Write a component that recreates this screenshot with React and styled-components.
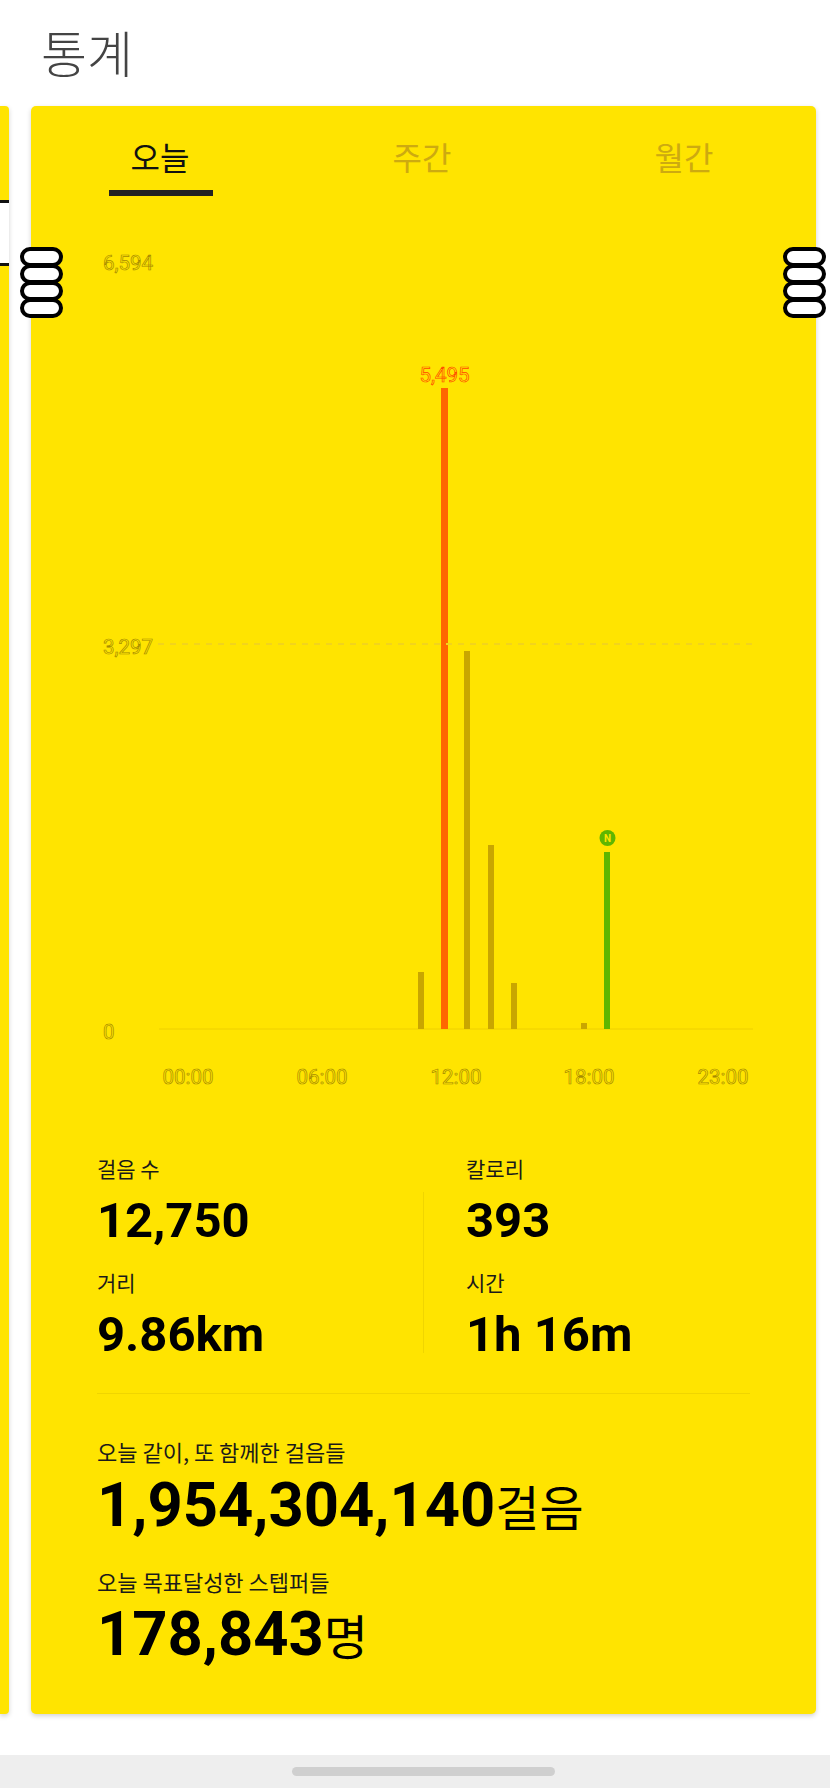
import React from "react";
import styled, { createGlobalStyle } from "styled-components";

const Y = "#ffe400";
const KR = '"Noto Sans CJK KR", sans-serif';

const Global = createGlobalStyle`
  html, body { margin: 0; padding: 0; background: #fff; }
  * { box-sizing: border-box; }
`;

const Screen = styled.div`
  width: 830px;
  height: 1788px;
  display: flex;
  flex-direction: column;
  overflow: hidden;
  position: relative;
  background: #fff;
`;

const Header = styled.header`
  height: 106px;
  padding: 20px 0 0 41px;
  font-family: ${KR};
  font-size: 50px;
  line-height: 62px;
  font-weight: 300;
  color: #444;
`;

const Carousel = styled.div`
  display: flex;
  gap: 22px;
  height: 1608px;
`;

const Peek = styled.div`
  width: 9px;
  height: 100%;
  flex: none;
  background: ${Y};
  border-radius: 0 4px 4px 0;
  box-shadow: 0 2px 5px rgba(0, 0, 0, 0.18);
  padding-top: 94px;
`;

const PeekBand = styled.div`
  height: 66px;
  background: #fff;
  border-top: 3px solid #111;
  border-bottom: 3px solid #111;
`;

const Card = styled.section`
  width: 785px;
  flex: none;
  height: 100%;
  background: ${Y};
  border-radius: 5px;
  box-shadow: 0 2px 5px rgba(0, 0, 0, 0.18);
`;

const Tabs = styled.nav`
  display: flex;
  height: 90px;
  margin-left: -2px;
`;

const Tab = styled.div`
  width: 262px;
  height: 100%;
  display: flex;
  justify-content: center;
  font-family: ${KR};
  font-size: 32px;
  line-height: 46px;
  padding-top: 27px;
  color: ${(p) => (p.$active ? "#111" : "#cdaa10")};
  position: relative;
  &::after {
    content: "";
    display: ${(p) => (p.$active ? "block" : "none")};
    position: absolute;
    left: 80px;
    bottom: 0;
    width: 104px;
    height: 6px;
    background: #222;
  }
`;

const ChartSvg = styled.svg`
  display: block;
  width: 785px;
  height: 944px;
`;

const AxisText = styled.text`
  font-family: Roboto, sans-serif;
  font-size: 20.5px;
  fill: ${Y};
  stroke: ${(p) => p.$stroke || "#a88c00"};
  stroke-width: 0.7px;
`;

const StatsGrid = styled.div`
  margin: 0 66px;
  display: grid;
  grid-template-columns: 369px 1fr;
  row-gap: 17px;
  padding: 14px 0 28px;
  border-bottom: 1px solid #f0d500;
  position: relative;
  &::before {
    content: "";
    position: absolute;
    left: 326px;
    top: 52px;
    height: 161px;
    width: 1px;
    background: #f0d500;
  }
`;

const Stat = styled.div`
  display: flex;
  flex-direction: column;
`;

const Label = styled.div`
  font-family: ${KR};
  font-size: ${(p) => (p.$big ? 22 : 21)}px;
  line-height: 28px;
  color: #1a1a1a;
  white-space: nowrap;
`;

const StatValue = styled.div`
  font-family: Roboto, sans-serif;
  font-weight: 700;
  font-size: 49px;
  line-height: 60px;
  margin-top: 9px;
  color: #000;
`;

const Totals = styled.div`
  margin: 0 66px;
  padding-top: 43px;
  display: flex;
  flex-direction: column;
`;

const TotalValue = styled.div`
  font-family: Roboto, sans-serif;
  font-weight: 700;
  font-size: 61.5px;
  line-height: 72px;
  height: 72px;
  margin: ${(p) => (p.$last ? "3px 0 0" : "4px 0 26px")};
  color: #000;
  white-space: nowrap;
`;

const Unit = styled.span`
  font-family: ${KR};
  font-weight: 400;
  font-size: 48px;
`;

const Rings = styled.div`
  position: absolute;
  top: 247px;
  left: ${(p) => p.$left}px;
  display: flex;
  flex-direction: column;
`;

const Ring = styled.div`
  width: 43px;
  height: 20px;
  margin-top: -3px;
  &:first-child { margin-top: 0; }
  background: #fff;
  border: 4.5px solid #000;
  border-radius: 10px;
`;

const HomeBar = styled.div`
  margin-top: 41px;
  height: 33px;
  background: #eeeeee;
  display: flex;
  justify-content: center;
  padding: 12px 0 0 16px;
`;

const Handle = styled.div`
  width: 263px;
  height: 9px;
  background: #cfcfcf;
  border-radius: 5px;
`;

// chart coordinates: x = page x - 31, y = page y - 196
const bars = [
  { x: 387, top: 972, w: 6, c: "#c9a600" },
  { x: 410, top: 388, w: 7, c: "#ff6600" },
  { x: 433, top: 651, w: 6, c: "#c9a600" },
  { x: 457, top: 845, w: 6, c: "#c9a600" },
  { x: 480, top: 983, w: 6, c: "#c9a600" },
  { x: 550, top: 1023, w: 6, c: "#c9a600" },
  { x: 573, top: 852, w: 6, c: "#5fb600" },
];
const yLabels = [
  { t: "6,594", y: 74 },
  { t: "3,297", y: 458 },
  { t: "0", y: 843 },
];
const xLabels = [
  { t: "00:00", x: 157 },
  { t: "06:00", x: 291 },
  { t: "12:00", x: 425 },
  { t: "18:00", x: 558 },
  { t: "23:00", x: 692 },
];

function Chart() {
  return (
    <ChartSvg viewBox="0 0 785 944">
      {yLabels.map((l) => (
        <AxisText key={l.t} x={72} y={l.y}>{l.t}</AxisText>
      ))}
      <line x1="128" x2="722" y1="833" y2="833" stroke="#eed000" strokeWidth="1" />
      {bars.map((b) => (
        <rect key={b.x} x={b.x} y={b.top - 196} width={b.w} height={1029 - b.top} fill={b.c} />
      ))}
      <line x1="127" x2="722" y1="448" y2="448" stroke="#f2d41c" strokeWidth="2" strokeDasharray="6 6" />
      <AxisText x={413.5} y={186} textAnchor="middle" $stroke="#ff4800">5,495</AxisText>
      <circle cx="576.5" cy="642" r="8" fill="#5fb600" />
      <text x="576.5" y="645.5" textAnchor="middle" fontFamily="Roboto, sans-serif" fontWeight="700" fontSize="10" fill={Y}>N</text>
      {xLabels.map((l) => (
        <AxisText key={l.t} x={l.x} y={888} textAnchor="middle">{l.t}</AxisText>
      ))}
    </ChartSvg>
  );
}

const stats = [
  ["걸음 수", "12,750"],
  ["칼로리", "393"],
  ["거리", "9.86km"],
  ["시간", "1h 16m"],
];

export default function App() {
  return (
    <Screen>
      <Global />
      <Header>통계</Header>
      <Carousel>
        <Peek><PeekBand /></Peek>
        <Card>
          <Tabs>
            <Tab $active>오늘</Tab>
            <Tab>주간</Tab>
            <Tab>월간</Tab>
          </Tabs>
          <Chart />
          <StatsGrid>
            {stats.map(([l, v]) => (
              <Stat key={l}>
                <Label>{l}</Label>
                <StatValue>{v}</StatValue>
              </Stat>
            ))}
          </StatsGrid>
          <Totals>
            <Label $big>오늘 같이, 또 함께한 걸음들</Label>
            <TotalValue>1,954,304,140<Unit>걸음</Unit></TotalValue>
            <Label $big>오늘 목표달성한 스텝퍼들</Label>
            <TotalValue $last>178,843<Unit>명</Unit></TotalValue>
          </Totals>
        </Card>
      </Carousel>
      <HomeBar><Handle /></HomeBar>
      <Rings $left={20}><Ring /><Ring /><Ring /><Ring /></Rings>
      <Rings $left={783}><Ring /><Ring /><Ring /><Ring /></Rings>
    </Screen>
  );
}
